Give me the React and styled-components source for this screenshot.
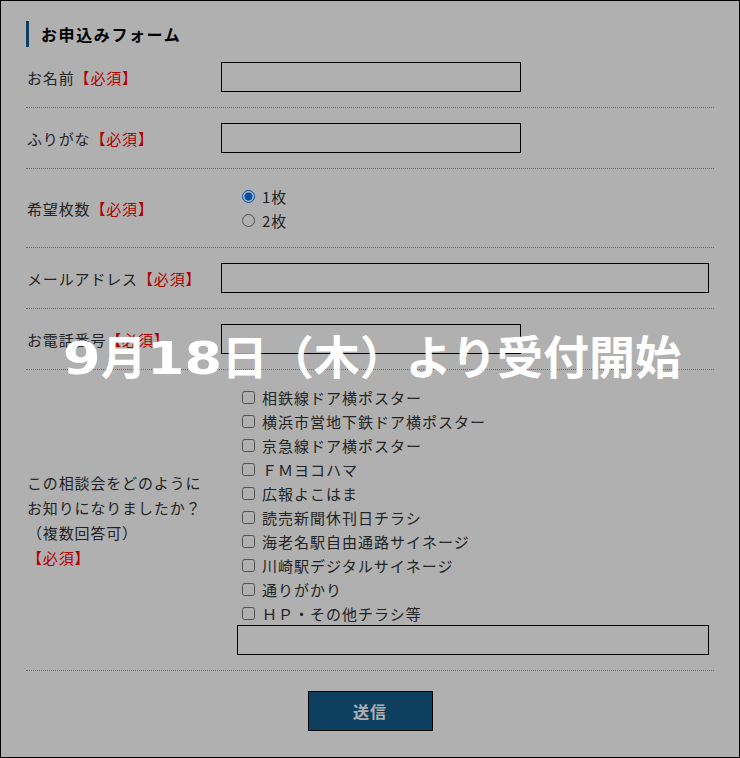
import React from "react";
import styled, { createGlobalStyle } from "styled-components";

const GlobalStyle = createGlobalStyle`
  html, body {
    margin: 0;
    padding: 0;
  }
  body {
    font-family: "Noto Sans CJK JP", "Noto Sans", sans-serif;
    color: #333;
  }
  * {
    box-sizing: border-box;
  }
`;

const Page = styled.div`
  position: relative;
  width: 740px;
  height: 758px;
  border: 1px solid #000;
  background: #fff;
  padding: 20px 25px 0 25px;
  overflow: hidden;
`;

const Heading = styled.h2`
  margin: 0;
  padding: 0 0 0 12px;
  border-left: 3px solid #145e8b;
  font-size: 16px;
  font-weight: 700;
  letter-spacing: 1.6px;
  line-height: 26px;
  color: #000;
`;

const Table = styled.div`
  width: 688px;
`;

const Row = styled.div`
  display: flex;
  align-items: center;
  padding: 15px 0;
  border-bottom: 1px dotted #999;
`;

const Label = styled.div`
  width: 195px;
  flex-shrink: 0;
  padding-left: 1px;
  font-size: 15px;
  letter-spacing: 0.85px;
  line-height: 25px;
  color: #333;
`;

const Required = styled.span`
  color: #f00;
`;

const Field = styled.div`
  flex: 1;
  display: flex;
  flex-direction: column;
`;

const TextInput = styled.input`
  width: ${(p) => p.$width};
  height: 30px;
  margin: 0 0 0 ${(p) => p.$indent || "0px"};
  border: 1px solid #000;
  border-radius: 0;
  background: #fff;
  font-size: 14px;
  padding: 0 6px;
  outline: none;
`;

const Option = styled.label`
  display: flex;
  align-items: center;
  height: 24px;
  font-size: 15px;
  letter-spacing: 1px;
  color: #333;

  input {
    margin: 1px 7px 0 21px;
    width: 13px;
    height: 13px;
  }
`;

const ButtonRow = styled.div`
  display: flex;
  justify-content: center;
  padding: 20px 0;
`;

const SubmitButton = styled.button`
  width: 125px;
  height: 40px;
  background: #145e8b;
  border: 1px solid #000;
  color: #fff;
  font-family: "Noto Sans CJK JP", sans-serif;
  font-size: 16px;
  font-weight: 700;
  letter-spacing: 1px;
  cursor: pointer;
`;

const Overlay = styled.div`
  position: absolute;
  inset: 0;
  background: rgba(0, 0, 0, 0.31);
  display: flex;
  align-items: center;
  justify-content: center;
  padding-bottom: 50px;
`;

const Notice = styled.p`
  margin: 0;
  padding-left: 4px;
  color: #fff;
  font-family: "Noto Sans CJK JP", sans-serif;
  font-size: 46px;
  font-weight: 700;
  letter-spacing: 0;
  white-space: nowrap;
`;

/* the digits in the banner are set wide */
const Digits = styled.span`
  display: inline-block;
  font-family: "DejaVu Sans", "Noto Sans CJK JP", sans-serif;
  font-size: 45px;
  font-weight: 700;
  transform: scaleX(1.2);
  transform-origin: left center;
  margin-right: ${(p) => p.$count * 0.139}em;
`;

const sources = [
  "相鉄線ドア横ポスター",
  "横浜市営地下鉄ドア横ポスター",
  "京急線ドア横ポスター",
  "ＦＭヨコハマ",
  "広報よこはま",
  "読売新聞休刊日チラシ",
  "海老名駅自由通路サイネージ",
  "川崎駅デジタルサイネージ",
  "通りがかり",
  "ＨＰ・その他チラシ等",
];

const Req = () => <Required>【必須】</Required>;

export default function App() {
  return (
    <>
      <GlobalStyle />
      <Page>
        <Heading>お申込みフォーム</Heading>
        <Table>
          <Row>
            <Label>
              お名前<Req />
            </Label>
            <Field>
              <TextInput type="text" $width="300px" />
            </Field>
          </Row>
          <Row>
            <Label>
              ふりがな<Req />
            </Label>
            <Field>
              <TextInput type="text" $width="300px" />
            </Field>
          </Row>
          <Row>
            <Label>
              希望枚数<Req />
            </Label>
            <Field>
              <Option>
                <input type="radio" name="count" defaultChecked />
                1枚
              </Option>
              <Option>
                <input type="radio" name="count" />
                2枚
              </Option>
            </Field>
          </Row>
          <Row>
            <Label>
              メールアドレス<Req />
            </Label>
            <Field>
              <TextInput type="email" $width="488px" />
            </Field>
          </Row>
          <Row>
            <Label>
              お電話番号<Req />
            </Label>
            <Field>
              <TextInput type="tel" $width="300px" />
            </Field>
          </Row>
          <Row>
            <Label>
              この相談会をどのように
              <br />
              お知りになりましたか？
              <br />
              （複数回答可）
              <br />
              <Req />
            </Label>
            <Field>
              {sources.map((s) => (
                <Option key={s}>
                  <input type="checkbox" />
                  {s}
                </Option>
              ))}
              <TextInput type="text" $width="472px" $indent="16px" />
            </Field>
          </Row>
        </Table>
        <ButtonRow>
          <SubmitButton type="button">送信</SubmitButton>
        </ButtonRow>
        <Overlay>
          <Notice>
            <Digits $count={1}>9</Digits>月<Digits $count={2}>18</Digits>日（木）より受付開始
          </Notice>
        </Overlay>
      </Page>
    </>
  );
}
